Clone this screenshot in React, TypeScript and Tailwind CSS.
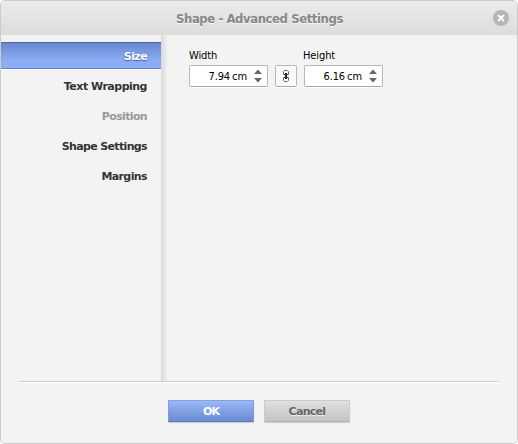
const NAV = [
  { label: 'Text Wrapping', style: 'text-[#333] tracking-[-0.5px]' },
  { label: 'Position', style: 'text-[#999] tracking-[-0.65px]' },
  { label: 'Shape Settings', style: 'text-[#333] tracking-[-0.65px]' },
  { label: 'Margins', style: 'text-[#333] tracking-[-0.6px]' },
];

function Spinner({ label, labelStyle, value }: { label: string; labelStyle: string; value: string }) {
  return (
    <div className="w-[79px]">
      <div className={`h-[16px] text-[11px] leading-[14px] tracking-[-0.1px] text-black ${labelStyle}`}>{label}</div>
      <div className="flex h-[22px] items-center rounded-[2px] border border-[#b9b9b9] border-b-[#a9a9a9] bg-white shadow-[0_1px_0_#fff]">
        <span className="flex-1 whitespace-nowrap pt-[2px] text-right text-[11px] leading-[14px] tracking-[-0.1px] text-black [word-spacing:-1px]">{value}</span>
        <svg className="ml-[6px] mr-[4px]" width="10" height="18" viewBox="0 0 10 18" fill="#666">
          <path d="M1 7 5 2.5 9 7zM1 11h8l-4 4.5z" />
        </svg>
      </div>
    </div>
  );
}

export default function App() {
  return (
    <div className="h-[444px] w-[518px] overflow-hidden bg-white font-['DejaVu_Sans_Condensed','DejaVu_Sans',sans-serif] [font-stretch:condensed]">
      <div className="flex h-full flex-col overflow-hidden rounded-[5px] border border-[#cbcbcb] bg-[#f3f3f3]">
        <header className="flex h-[34px] shrink-0 items-center bg-linear-to-b from-[#ebebeb] to-[#dcdcdc] pl-[175px] pr-[8px]">
          <h1 className="flex-1 whitespace-nowrap pt-px text-[13px] leading-4 font-bold tracking-[-0.43px] text-[#888] [text-shadow:0_1px_0_#f5f5f5]">Shape - Advanced Settings</h1>
          <svg width="16" height="16" viewBox="0 0 16 16">
            <circle cx="8" cy="8" r="8" fill="#b5b5b5" />
            <path d="m5 5 6 6m0-6-6 6" stroke="#fff" strokeWidth="2" />
          </svg>
        </header>
        <div className="flex h-[346px] shrink-0">
          <nav className="flex w-[160px] flex-col pt-[7px] text-right font-['DejaVu_Sans',sans-serif] text-[11px] font-bold [font-stretch:normal]">
            <div className="mb-[2px] h-[27px] border-t border-b border-t-[#4a66a5] border-b-[#6585ca] bg-linear-to-b from-[#6788cd] to-[#8cacf5] to-70% pr-[14px] pt-px leading-[26px] tracking-[-0.6px] text-white shadow-[0_1px_0_#fff] [text-shadow:0_1px_1px_#455f96]">Size</div>
            {NAV.map((n) => (
              <div key={n.label} className={`h-[30px] whitespace-nowrap pr-[14px] pt-px leading-[29px] ${n.style}`}>{n.label}</div>
            ))}
          </nav>
          <div className="w-[7px] bg-linear-to-r from-[#d8d8d8] to-[#f3f3f3]" />
          <main className="flex items-start pl-[21px] pt-[14px]">
            <Spinner label="Width" labelStyle="ml-0" value="7.94 cm" />
            <button className="ml-[7px] mt-[16px] flex h-[22px] w-[22px] items-center justify-center rounded-[2px] border border-[#b9b9b9] border-b-[#a9a9a9] bg-[#fafafa] shadow-[0_1px_0_#fff]">
              <svg width="8" height="14" viewBox="0 0 8 14" fill="none" stroke="#666">
                <path d="M2.5 5.5h-1v-3l1-1h3l1 1v3h-1M2.5 8.5h-1v3l1 1h3l1-1v-3h-1" />
                <path d="M4 4v6" stroke="#222" strokeWidth="2" />
                <path d="M2 5.5h4M2 8.5h4" stroke="#333" />
              </svg>
            </button>
            <div className="ml-[7px]"><Spinner label="Height" labelStyle="-ml-px" value="6.16 cm" /></div>
          </main>
        </div>
        <footer className="flex flex-1 flex-col px-[18px]">
          <div className="flex h-[2px] shrink-0 flex-col border-t border-[#cbcbcb] bg-white" />
          <div className="mt-[17px] flex justify-center gap-[10px] font-['DejaVu_Sans',sans-serif] text-[11px] font-bold [font-stretch:normal]">
            <button className="h-[22px] w-[86px] rounded-[1px] border border-[#7e9adb] border-t-[#84a1e2] border-b-[#5d7cbc] bg-linear-to-b from-[#9ab7f7] to-[#6b8bd2] pt-[2px] leading-[18px] tracking-[-1px] text-white shadow-[0_1px_1px_#ccc]">OK</button>
            <button className="h-[22px] w-[86px] rounded-[1px] border border-[#cbcbcb] border-b-[#b3b3b3] bg-linear-to-b from-[#e0e0e0] to-[#c4c4c4] pt-[2px] leading-[18px] tracking-[-0.7px] text-[#666] shadow-[0_1px_1px_#ccc] [text-shadow:0_1px_0_#eee]">Cancel</button>
          </div>
        </footer>
      </div>
    </div>
  );
}
